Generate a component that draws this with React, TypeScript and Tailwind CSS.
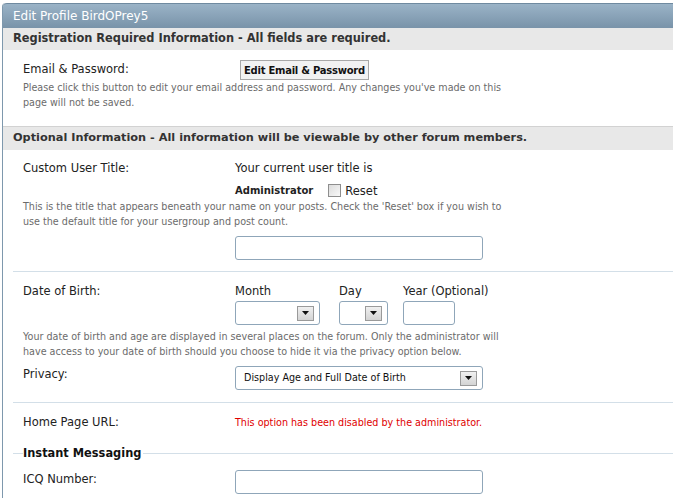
import React from "react";

function SelectBox({ width, text }: { width: string; text?: string }) {
  return (
    <div
      className={`${width} h-[24px] flex items-center justify-between rounded-[3px] border border-[#8fa6b9] bg-white pl-[8px] pr-[5px]`}
    >
      <span className="text-[9.6px] text-[#111]">{text ?? ""}</span>
      <span className="w-[17px] h-[15px] flex items-center justify-center border border-[#9a9a9a] bg-gradient-to-b from-[#f0f0f0] to-[#d4d4d4]">
        <svg width="7" height="4" viewBox="0 0 7 4">
          <path d="M0 0 H7 L3.5 4 Z" fill="#111" />
        </svg>
      </span>
    </div>
  );
}

function TextBox({ width }: { width: string }) {
  return <div className={`${width} h-[24px] rounded-[3px] border border-[#8fa6b9] bg-white`} />;
}

function Divider() {
  return <div className="ml-[10px] h-px bg-[#d3dfe8]" />;
}

function Help({ children }: { children: React.ReactNode }) {
  return <p className="text-[9.6px] leading-[15px] text-[#6b6b6b] w-[482px]">{children}</p>;
}

export default function App() {
  return (
    <div className="w-[673px] h-[498px] overflow-hidden bg-white font-['Tahoma','DejaVu_Sans',sans-serif] text-[#222]">
      <div className="ml-[2px] mt-[3px] border-l border-[#7e98ad] rounded-tl-[4px] min-h-[495px]">
        <div className="h-[25px] flex items-center pl-[10px] rounded-tl-[4px] border-t border-[#6f8aa0] bg-gradient-to-b from-[#9ab3c7] to-[#7993a9] text-white text-[12px]">
          Edit Profile BirdOPrey5
        </div>

        <div className="h-[22px] flex items-center pl-[10px] bg-[#e8e8e8] text-[11.4px] font-bold text-[#333]">
          Registration Required Information - All fields are required.
        </div>

        <div className="pl-[20px] pt-[10px] pb-[16px]">
          <div className="flex items-center h-[20px]">
            <span className="w-[217px] text-[11.5px]">Email &amp; Password:</span>
            <button className="h-[20px] px-[3px] border border-[#a8a8a8] bg-[#f2f2f2] text-[10px] tracking-[-0.25px] font-bold text-[#111]">
              Edit Email &amp; Password
            </button>
          </div>
          <Help>
            Please click this button to edit your email address and password. Any changes you've made on this page will not be saved.
          </Help>
        </div>

        <div className="h-[24px] flex items-center pl-[10px] border-t border-[#d2d2d2] bg-[#e8e8e8] text-[11.3px] font-bold text-[#333]">
          Optional Information - All information will be viewable by other forum members.
        </div>

        <div className="pl-[20px] pt-[9px] pb-[11px]">
          <div className="flex h-[20px] items-center">
            <span className="w-[212px] text-[11.5px]">Custom User Title:</span>
            <span className="text-[11.5px]">Your current user title is</span>
          </div>
          <div className="flex h-[20px] items-end pb-[1px]">
            <span className="w-[212px]" />
            <span className="text-[10px] font-bold">Administrator</span>
            <span className="ml-[15px] mb-[1px] w-[13px] h-[13px] border border-[#8e8e8e] bg-gradient-to-br from-[#dcdcdc] to-[#f8f8f8]" />
            <span className="ml-[4px] text-[11.5px] leading-[14px]">Reset</span>
          </div>
          <Help>
            This is the title that appears beneath your name on your posts. Check the 'Reset' box if you wish to use the default title for your usergroup and post count.
          </Help>
          <div className="flex mt-[7px]">
            <span className="w-[212px]" />
            <TextBox width="w-[248px]" />
          </div>
        </div>

        <Divider />

        <div className="pl-[20px] pt-[11px] pb-[12px]">
          <div className="flex">
            <span className="w-[212px] text-[11.5px] leading-[16px]">Date of Birth:</span>
            <div className="flex flex-col">
              <span className="text-[11.5px] leading-[16px]">Month</span>
              <div className="mt-[2px]">
                <SelectBox width="w-[85px]" />
              </div>
            </div>
            <div className="flex flex-col ml-[19px]">
              <span className="text-[11.5px] leading-[16px]">Day</span>
              <div className="mt-[2px]">
                <SelectBox width="w-[49px]" />
              </div>
            </div>
            <div className="flex flex-col ml-[15px]">
              <span className="text-[11.5px] leading-[16px]">Year (Optional)</span>
              <div className="mt-[2px]">
                <TextBox width="w-[52px]" />
              </div>
            </div>
          </div>
          <div className="mt-[4px]">
            <Help>
              Your date of birth and age are displayed in several places on the forum. Only the administrator will have access to your date of birth should you choose to hide it via the privacy option below.
            </Help>
          </div>
          <div className="flex items-center mt-[7px]">
            <span className="w-[212px] text-[11.5px] pb-[6px]">Privacy:</span>
            <SelectBox width="w-[248px]" text="Display Age and Full Date of Birth" />
          </div>
        </div>

        <Divider />

        <div className="pl-[20px] h-[42px] flex items-center pb-[2px]">
          <span className="w-[212px] text-[11.5px]">Home Page URL:</span>
          <span className="text-[9.6px] text-[#e00000]">This option has been disabled by the administrator.</span>
        </div>

        <fieldset className="ml-[10px] border-t border-[#d3dfe8] pl-[10px]">
          <legend className="text-[11.4px] font-bold text-[#111] pr-[2px]">Instant Messaging</legend>
          <div className="flex items-start mt-[8px]">
            <span className="w-[212px] text-[11.5px] pt-[1px]">ICQ Number:</span>
            <TextBox width="w-[248px]" />
          </div>
        </fieldset>
      </div>
    </div>
  );
}
